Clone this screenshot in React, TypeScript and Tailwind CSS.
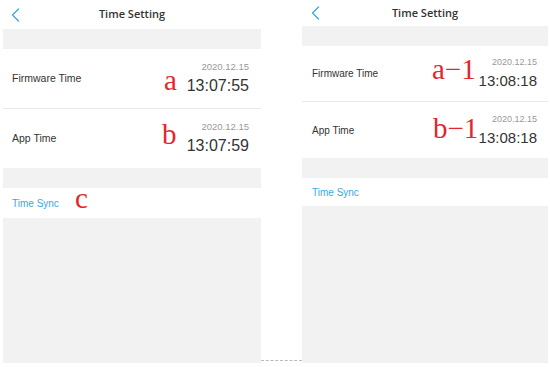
import React from "react";

const sans = { fontFamily: '"Liberation Sans", Arial, sans-serif' };
const serif = { fontFamily: '"Liberation Serif", "Times New Roman", serif' };
const title = { fontFamily: '"Open Sans", "Liberation Sans", sans-serif' };

function Chevron() {
  return (
    <svg width="9" height="14" viewBox="0 0 9 14" fill="none">
      <path d="M7.5 1 L1.5 7 L7.5 13" stroke="#3aa8e4" strokeWidth="1.3" strokeLinecap="round" strokeLinejoin="round" />
    </svg>
  );
}

function Header({ h, chevLeft }: { h: string; chevLeft: string }) {
  return (
    <div className={`relative flex items-center justify-center bg-white ${h}`}>
      <div className={`absolute top-1/2 -translate-y-1/2 ${chevLeft}`}>
        <Chevron />
      </div>
      <span className="text-[11px] font-semibold text-[#333]" style={title}>Time Setting</span>
    </div>
  );
}

function TimeRow({
  label,
  time,
  h,
  pl,
  pr,
  timeSize,
  dateSize,
  labelSize,
  border,
}: {
  label: string;
  time: string;
  h: string;
  pl: string;
  pr: string;
  timeSize: string;
  dateSize: string;
  labelSize: string;
  border?: boolean;
}) {
  return (
    <div className={`flex items-center justify-between bg-white ${h} ${pl} ${pr} ${border ? "border-b border-[#e9e9e9]" : ""}`}>
      <span className={`${labelSize} text-[#333]`}>{label}</span>
      <div className="flex flex-col items-end">
        <span className={`${dateSize} leading-[12px] text-[#999]`}>2020.12.15</span>
        <span className={`${timeSize} leading-[20px] mt-[3px] text-[#333]`}>{time}</span>
      </div>
    </div>
  );
}

export default function App() {
  return (
    <div className="relative flex h-[367px] w-[550px] overflow-hidden bg-white" style={sans}>
      {/* Left phone */}
      <div className="ml-[3px] flex w-[258px] flex-col">
        <Header h="h-[29px]" chevLeft="left-[8px]" />
        <div className="h-[20px] bg-[#f2f2f2]" />
        <TimeRow label="Firmware Time" time="13:07:55" h="h-[60px]" pl="pl-[9px]" pr="pr-[12px]" timeSize="text-[16px]" dateSize="text-[9.5px]" labelSize="text-[10.5px]" border />
        <TimeRow label="App Time" time="13:07:59" h="h-[59px]" pl="pl-[9px]" pr="pr-[12px]" timeSize="text-[16px]" dateSize="text-[9.5px]" labelSize="text-[10.5px]" />
        <div className="h-[20px] bg-[#f2f2f2]" />
        <div className="flex h-[30px] items-center bg-white pl-[9px]">
          <span className="text-[10px] text-[#3aa8e4]">Time Sync</span>
        </div>
        <div className="h-[145px] bg-[#f2f2f2]" />
      </div>

      {/* Gap */}
      <div className="flex w-[41px] flex-col">
        <div className="h-[360px]" />
        <div className="h-0 border-t border-dashed border-[#bbb]" />
      </div>

      {/* Right phone */}
      <div className="flex w-[246px] flex-col">
        <Header h="h-[26px]" chevLeft="left-[9px]" />
        <div className="h-[20px] bg-[#f2f2f2]" />
        <TimeRow label="Firmware Time" time="13:08:18" h="h-[56px]" pl="pl-[10px]" pr="pr-[11px]" timeSize="text-[15px]" dateSize="text-[9px]" labelSize="text-[10px]" border />
        <TimeRow label="App Time" time="13:08:18" h="h-[56px]" pl="pl-[10px]" pr="pr-[11px]" timeSize="text-[15px]" dateSize="text-[9px]" labelSize="text-[10px]" />
        <div className="h-[20px] bg-[#f2f2f2]" />
        <div className="flex h-[28px] items-center bg-white pl-[10px]">
          <span className="text-[10px] text-[#3aa8e4]">Time Sync</span>
        </div>
        <div className="h-[157px] bg-[#f2f2f2]" />
      </div>

      {/* Annotations */}
      <span className="absolute left-[164px] top-[66px] text-[29px] leading-none text-[#e3262b]" style={serif}>a</span>
      <span className="absolute left-[162px] top-[120px] text-[29px] leading-none text-[#e3262b]" style={serif}>b</span>
      <span className="absolute left-[75px] top-[184px] text-[29px] leading-none text-[#e3262b]" style={serif}>c</span>
      <span className="absolute left-[432px] top-[55px] text-[29px] leading-none text-[#e3262b]" style={serif}>a−1</span>
      <span className="absolute left-[433px] top-[114px] text-[29px] leading-none text-[#e3262b]" style={serif}>b−1</span>
    </div>
  );
}
